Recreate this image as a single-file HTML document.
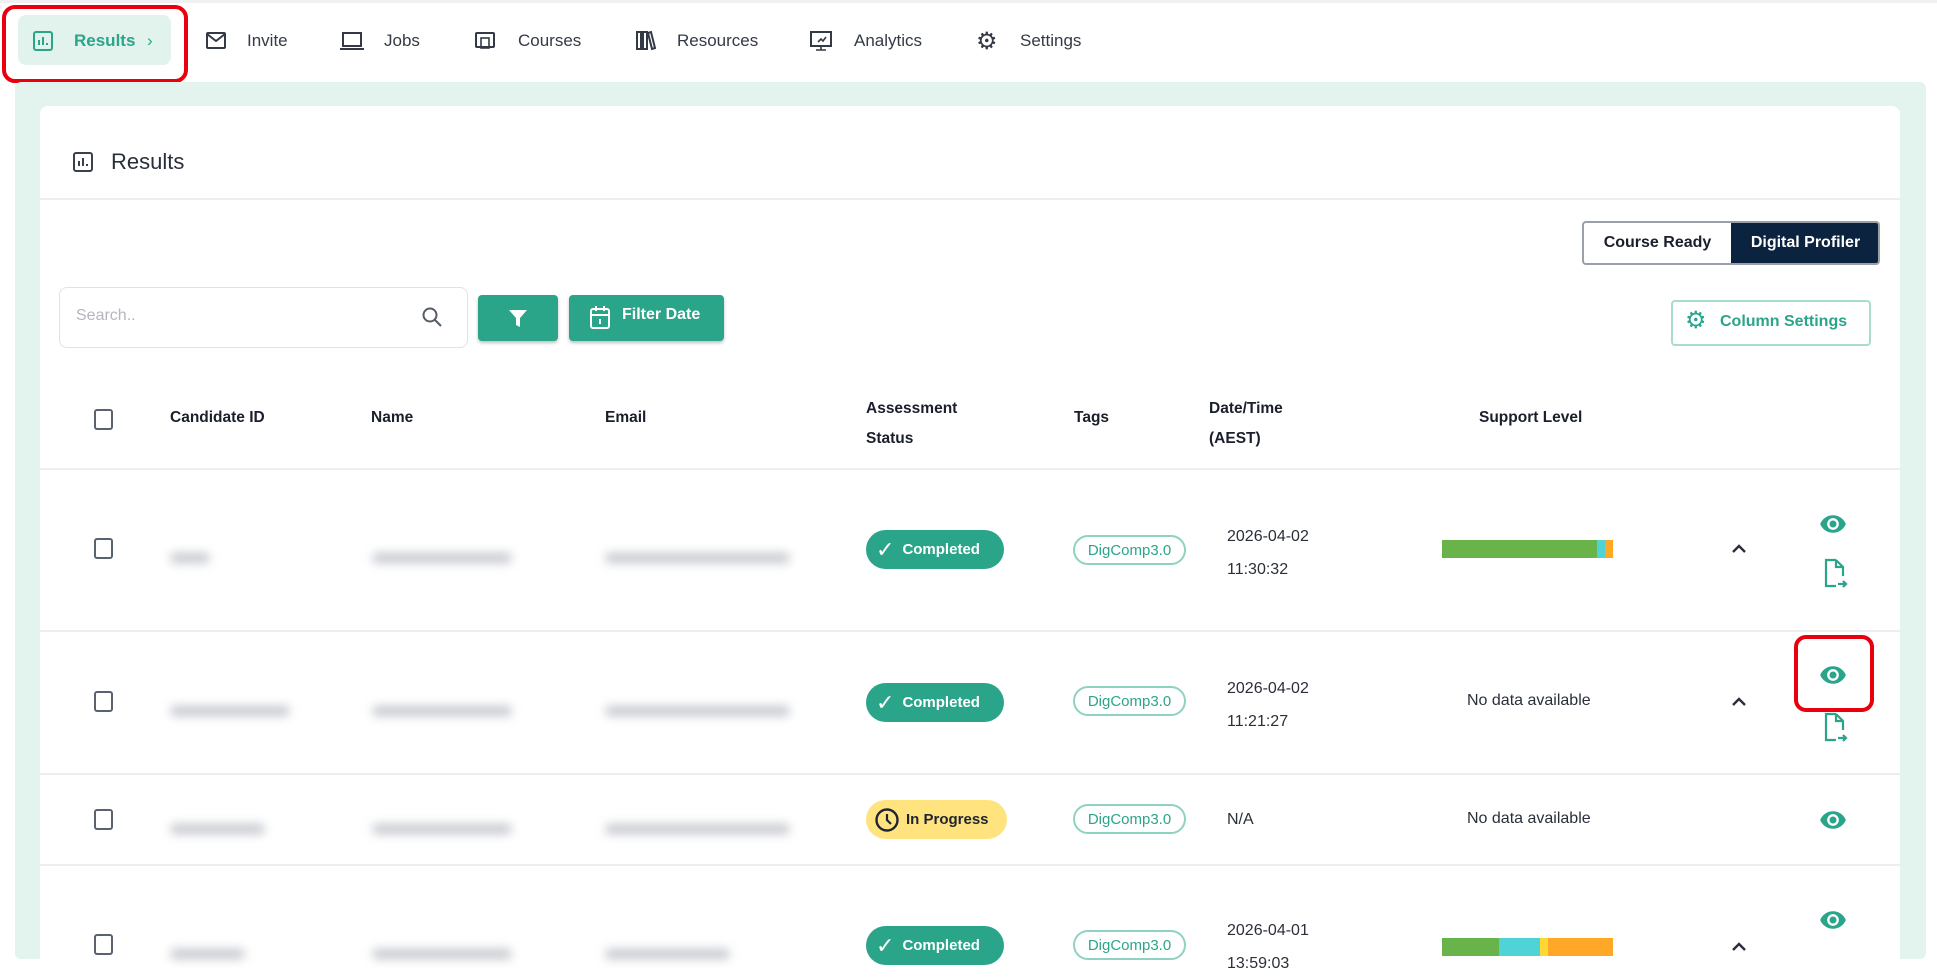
<!DOCTYPE html>
<html><head><meta charset="utf-8"><style>
*{box-sizing:border-box;margin:0;padding:0}
body{width:1937px;height:965px;overflow:hidden;background:#fff;font-family:"Liberation Sans",Arial,sans-serif;color:#1f2430;position:relative}
.a{position:absolute}
.nav{font-size:17px;color:#333a45;top:31px}
.hd{font-size:15.5px;font-weight:bold;color:#1a1f2b;position:absolute}
.cb{position:absolute;width:19px;height:21px;border:2px solid #5a6270;border-radius:3px;left:94px}
.blur{position:absolute;height:10px;background:#c4c7cd;filter:blur(5px);border-radius:5px}
.pill{position:absolute;left:866px;width:138px;height:39px;border-radius:20px;background:#2ba58a;color:#fff;font-size:15px;font-weight:bold;display:flex;align-items:center;padding-left:10px}
.tag{position:absolute;left:1073px;width:113px;height:30px;border:2px solid #8fd2c2;border-radius:15px;color:#2ba58a;font-size:15px;display:flex;align-items:center;justify-content:center}
.dt{position:absolute;left:1227px;font-size:16px;color:#2a2f3a;line-height:33px}
.nd{position:absolute;left:1467px;font-size:16px;color:#2a2f3a}
.car{position:absolute;left:1731px}
.line{position:absolute;left:40px;width:1860px;height:2px;background:#eceef0}
.eye{position:absolute;left:1818px}
.doc{position:absolute;left:1822px}
</style></head><body>
<div class="a" style="left:0;top:0;width:1937px;height:3px;background:#eef0f2"></div>
<div class="a" style="left:18px;top:15px;width:153px;height:50px;background:#e2f3ee;border-radius:8px"></div>
<div class="a" style="left:2px;top:5px;width:186px;height:78px;border:4px solid #e8000f;border-radius:13px"></div>
<svg class="a" style="left:32px;top:30px" width="22" height="22" viewBox="0 0 22 22"><rect x="2" y="2" width="18" height="18" rx="2" fill="none" stroke="#2ba58a" stroke-width="2"/><path d="M7 15V10M11 15V7M15 15v-2" stroke="#2ba58a" stroke-width="2"/></svg>
<div class="a nav" style="left:74px;color:#2ba58a;font-weight:bold">Results</div>
<div class="a nav" style="left:147px;color:#2ba58a">›</div>
<svg class="a" style="left:205px;top:31px" width="22" height="20" viewBox="0 0 22 20"><rect x="2" y="2" width="18" height="15" rx="1" fill="none" stroke="#333a45" stroke-width="2"/><path d="M2 3l9 7 9-7" fill="none" stroke="#333a45" stroke-width="2"/></svg>
<div class="a nav" style="left:247px">Invite</div>
<svg class="a" style="left:339px;top:30px" width="26" height="22" viewBox="0 0 26 22"><rect x="4" y="3" width="18" height="13" fill="none" stroke="#333a45" stroke-width="2"/><path d="M1 19h24" stroke="#333a45" stroke-width="2"/></svg>
<div class="a nav" style="left:384px">Jobs</div>
<svg class="a" style="left:474px;top:30px" width="22" height="22" viewBox="0 0 22 22"><rect x="2" y="3" width="18" height="14" rx="1" fill="none" stroke="#333a45" stroke-width="2"/><rect x="7" y="8" width="8" height="10" fill="none" stroke="#333a45" stroke-width="1.6"/></svg>
<div class="a nav" style="left:518px">Courses</div>
<svg class="a" style="left:634px;top:29px" width="22" height="22" viewBox="0 0 22 22"><path d="M3 3h4v17H3zM9 3h4v17H9zM14 4l3-1 4 16-3 1z" fill="none" stroke="#333a45" stroke-width="2"/></svg>
<div class="a nav" style="left:677px">Resources</div>
<svg class="a" style="left:809px;top:29px" width="24" height="24" viewBox="0 0 24 24"><rect x="2" y="3" width="20" height="14" fill="none" stroke="#333a45" stroke-width="2"/><path d="M12 17v4M7 21h10M9 13l3-3 2 2 3-4" fill="none" stroke="#333a45" stroke-width="1.6"/></svg>
<div class="a nav" style="left:854px">Analytics</div>
<div class="a" style="left:976px;top:27px;font-size:24px;color:#333a45">⚙</div>
<div class="a nav" style="left:1020px">Settings</div>
<div class="a" style="left:15px;top:82px;width:1911px;height:877px;background:#e3f3ee;border-radius:6px"></div>
<div class="a" style="left:40px;top:106px;width:1860px;height:859px;background:#fff;border-radius:8px"></div>
<svg class="a" style="left:72px;top:151px" width="22" height="22" viewBox="0 0 22 22"><rect x="2" y="2" width="18" height="18" rx="2" fill="none" stroke="#3a414d" stroke-width="2"/><path d="M7 15V10M11 15V7M15 15v-2" stroke="#3a414d" stroke-width="2"/></svg>
<div class="a" style="left:111px;top:149px;font-size:22px;color:#2a303b">Results</div>
<div class="line" style="top:198px"></div>
<div class="a" style="left:1582px;top:221px;width:298px;height:44px;border:2px solid #9aa0a8;border-radius:4px;overflow:hidden">
<div class="a" style="left:0;top:0;width:147px;height:40px;display:flex;align-items:center;justify-content:center;font-size:16px;font-weight:bold;color:#1a1f2b">Course Ready</div>
<div class="a" style="left:147px;top:0;width:149px;height:40px;background:#0c2340;display:flex;align-items:center;justify-content:center;font-size:16px;font-weight:bold;color:#fff">Digital Profiler</div>
</div>
<div class="a" style="left:59px;top:287px;width:409px;height:61px;border:1.5px solid #dfe2e6;border-radius:8px"></div>
<div class="a" style="left:76px;top:307px;font-size:16px;color:#b3b7bd">Search..</div>
<svg class="a" style="left:420px;top:305px" width="24" height="24" viewBox="0 0 24 24"><circle cx="10" cy="10" r="6.5" fill="none" stroke="#555c66" stroke-width="2"/><path d="M15 15l6 6" stroke="#555c66" stroke-width="2"/></svg>
<div class="a" style="left:478px;top:295px;width:80px;height:46px;background:#2ba58a;border-radius:4px;box-shadow:0 2px 3px rgba(0,0,0,.25)"></div>
<svg class="a" style="left:507px;top:307px" width="22" height="22" viewBox="0 0 22 22"><path d="M2 3h18l-7 8v9l-4-2v-7z" fill="#fff"/></svg>
<div class="a" style="left:569px;top:295px;width:155px;height:46px;background:#2ba58a;border-radius:4px;box-shadow:0 2px 3px rgba(0,0,0,.25)"></div>
<svg class="a" style="left:589px;top:304px" width="22" height="26" viewBox="0 0 22 26"><rect x="2" y="5" width="18" height="19" rx="2" fill="none" stroke="#fff" stroke-width="2"/><path d="M2 11h18M7 2v5M15 2v5M11 15v5" stroke="#fff" stroke-width="2"/></svg>
<div class="a" style="left:622px;top:306px;font-size:16px;font-weight:bold;color:#fff">Filter Date</div>
<div class="a" style="left:1671px;top:300px;width:200px;height:46px;border:2px solid #a9dccf;border-radius:4px"></div>
<div class="a" style="left:1685px;top:306px;font-size:24px;color:#2ba58a">⚙</div>
<div class="a" style="left:1720px;top:313px;font-size:16px;font-weight:bold;color:#2ba58a">Column Settings</div>
<div class="cb" style="top:409px"></div>
<div class="hd" style="left:170px;top:409px">Candidate ID</div>
<div class="hd" style="left:371px;top:409px">Name</div>
<div class="hd" style="left:605px;top:409px">Email</div>
<div class="hd" style="left:866px;top:394px;line-height:30px">Assessment<br>Status</div>
<div class="hd" style="left:1074px;top:409px">Tags</div>
<div class="hd" style="left:1209px;top:394px;line-height:30px">Date/Time<br>(AEST)</div>
<div class="hd" style="left:1479px;top:409px">Support Level</div>
<div class="line" style="top:468px"></div>
<!-- row1 -->
<div class="cb" style="top:538px"></div>
<div class="blur" style="left:170px;top:553px;width:40px"></div>
<div class="blur" style="left:372px;top:553px;width:140px"></div>
<div class="blur" style="left:605px;top:553px;width:185px"></div>
<div class="pill" style="top:530px"><span style="font-size:22px;font-weight:normal;margin-right:8px">✓</span>Completed</div>
<div class="tag" style="top:535px">DigComp3.0</div>
<div class="dt" style="top:520px">2026-04-02<br>11:30:32</div>
<div class="a" style="left:1442px;top:540px;width:155px;height:18px;background:#68b34a"></div>
<div class="a" style="left:1597px;top:540px;width:8px;height:18px;background:#4fd3d6"></div>
<div class="a" style="left:1605px;top:540px;width:8px;height:18px;background:#ffa726"></div>
<svg class="car" style="top:542px" width="16" height="12" viewBox="0 0 16 12"><path d="M2 10l6-6 6 6" fill="none" stroke="#2a2f3a" stroke-width="2.4"/></svg>
<svg class="eye" style="top:510px" width="30" height="28" viewBox="0 0 24 24"><path d="M12 4.5C7 4.5 2.7 7.6 1 12c1.7 4.4 6 7.5 11 7.5s9.3-3.1 11-7.5c-1.7-4.4-6-7.5-11-7.5zm0 12.5a5 5 0 110-10 5 5 0 010 10zm0-8a3 3 0 100 6 3 3 0 000-6z" fill="#2ba58a"/></svg>
<svg class="doc" style="top:558px" width="26" height="32" viewBox="0 0 26 32"><path d="M14 2H4v26h10M14 2l7 7v9M14 2v7h7M16 26h8M21 23l3 3-3 3" fill="none" stroke="#2ba58a" stroke-width="2.2"/></svg>
<div class="line" style="top:630px"></div>
<!-- row2 -->
<div class="cb" style="top:691px"></div>
<div class="blur" style="left:170px;top:706px;width:120px"></div>
<div class="blur" style="left:372px;top:706px;width:140px"></div>
<div class="blur" style="left:605px;top:706px;width:185px"></div>
<div class="pill" style="top:683px"><span style="font-size:22px;font-weight:normal;margin-right:8px">✓</span>Completed</div>
<div class="tag" style="top:686px">DigComp3.0</div>
<div class="dt" style="top:672px">2026-04-02<br>11:21:27</div>
<div class="nd" style="top:692px">No data available</div>
<svg class="car" style="top:695px" width="16" height="12" viewBox="0 0 16 12"><path d="M2 10l6-6 6 6" fill="none" stroke="#2a2f3a" stroke-width="2.4"/></svg>
<svg class="eye" style="top:661px" width="30" height="28" viewBox="0 0 24 24"><path d="M12 4.5C7 4.5 2.7 7.6 1 12c1.7 4.4 6 7.5 11 7.5s9.3-3.1 11-7.5c-1.7-4.4-6-7.5-11-7.5zm0 12.5a5 5 0 110-10 5 5 0 010 10zm0-8a3 3 0 100 6 3 3 0 000-6z" fill="#2ba58a"/></svg>
<svg class="doc" style="top:712px" width="26" height="32" viewBox="0 0 26 32"><path d="M14 2H4v26h10M14 2l7 7v9M14 2v7h7M16 26h8M21 23l3 3-3 3" fill="none" stroke="#2ba58a" stroke-width="2.2"/></svg>
<div class="a" style="left:1794px;top:635px;width:80px;height:77px;border:4px solid #e8000f;border-radius:12px"></div>
<div class="line" style="top:773px"></div>
<!-- row3 -->
<div class="cb" style="top:809px"></div>
<div class="blur" style="left:170px;top:824px;width:95px"></div>
<div class="blur" style="left:372px;top:824px;width:140px"></div>
<div class="blur" style="left:605px;top:824px;width:185px"></div>
<div class="pill" style="top:800px;background:#ffe37f;color:#1f2430;width:141px;padding-left:8px"><svg width="26" height="26" viewBox="0 0 26 26" style="margin-right:6px"><circle cx="13" cy="13" r="10.5" fill="none" stroke="#1f2430" stroke-width="2.4"/><path d="M13 7v6l4 4" fill="none" stroke="#1f2430" stroke-width="2.2"/></svg>In Progress</div>
<div class="tag" style="top:804px">DigComp3.0</div>
<div class="dt" style="top:803px">N/A</div>
<div class="nd" style="top:810px">No data available</div>
<svg class="eye" style="top:806px" width="30" height="28" viewBox="0 0 24 24"><path d="M12 4.5C7 4.5 2.7 7.6 1 12c1.7 4.4 6 7.5 11 7.5s9.3-3.1 11-7.5c-1.7-4.4-6-7.5-11-7.5zm0 12.5a5 5 0 110-10 5 5 0 010 10zm0-8a3 3 0 100 6 3 3 0 000-6z" fill="#2ba58a"/></svg>
<div class="line" style="top:864px"></div>
<!-- row4 -->
<div class="cb" style="top:934px"></div>
<div class="blur" style="left:170px;top:949px;width:75px"></div>
<div class="blur" style="left:372px;top:949px;width:140px"></div>
<div class="blur" style="left:605px;top:949px;width:125px"></div>
<div class="pill" style="top:926px"><span style="font-size:22px;font-weight:normal;margin-right:8px">✓</span>Completed</div>
<div class="tag" style="top:930px">DigComp3.0</div>
<div class="dt" style="top:914px">2026-04-01<br>13:59:03</div>
<div class="a" style="left:1442px;top:938px;width:57px;height:18px;background:#68b34a"></div>
<div class="a" style="left:1499px;top:938px;width:41px;height:18px;background:#4fd3d6"></div>
<div class="a" style="left:1540px;top:938px;width:8px;height:18px;background:#fdd835"></div>
<div class="a" style="left:1548px;top:938px;width:65px;height:18px;background:#ffa726"></div>
<svg class="car" style="top:940px" width="16" height="12" viewBox="0 0 16 12"><path d="M2 10l6-6 6 6" fill="none" stroke="#2a2f3a" stroke-width="2.4"/></svg>
<svg class="eye" style="top:906px" width="30" height="28" viewBox="0 0 24 24"><path d="M12 4.5C7 4.5 2.7 7.6 1 12c1.7 4.4 6 7.5 11 7.5s9.3-3.1 11-7.5c-1.7-4.4-6-7.5-11-7.5zm0 12.5a5 5 0 110-10 5 5 0 010 10zm0-8a3 3 0 100 6 3 3 0 000-6z" fill="#2ba58a"/></svg>
</body></html>
